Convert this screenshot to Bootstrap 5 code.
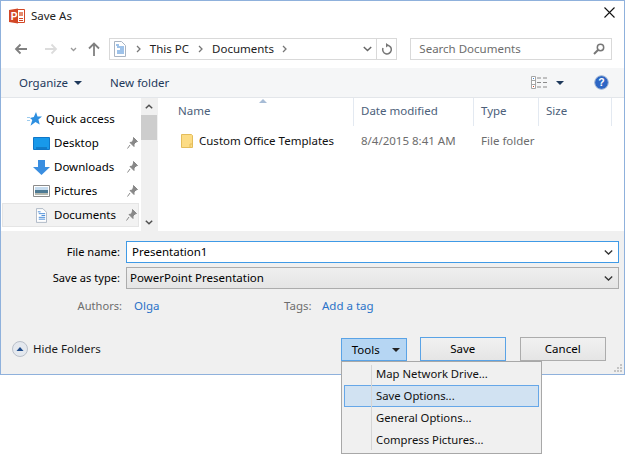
<!DOCTYPE html>
<html lang="en"><head><meta charset="utf-8"><title>Save As</title>
<link href="https://cdn.jsdelivr.net/npm/bootstrap@5.3.0/dist/css/bootstrap.min.css" rel="stylesheet">
<style>
html,body{margin:0;background:#fff;width:625px;height:454px;overflow:hidden}
body{font-family:"Noto Sans","Open Sans",sans-serif;font-size:11.5px;line-height:16px;color:#000}
.win{width:625px;height:375px;border:1px solid #8fb1dc;position:relative;background:#fff}
.ttl{height:31px;padding:0 0 2px 8px;gap:6px;color:#222}
.xbtn{margin-left:auto;margin-right:9px;margin-top:-6px}
.addr{height:29px;padding:6px 12px 1px 13px}
.navs{width:95px;gap:0;padding-left:0}
.crumb{width:289px;height:22px;border:1px solid #d9d9d9;padding-left:4px;gap:8px}
.crumb2{flex:1;padding-right:4px}
.rf{width:20px;height:20px;border-left:1px solid #d9d9d9}
.srch{width:202px;height:22px;margin-left:13px;border:1px solid #d9d9d9;color:#6d6d6d;padding:0 6px 0 8px}
.tbar{height:30px;margin-top:7px;background:#f5f6f7;color:#1e395b;border-bottom:1px solid #e3e6ea;padding-left:18px}
.main{height:133px}
.pane{width:140px;padding-top:9px}
.nrow{height:24px;margin-left:1px;padding-left:31px;position:relative;gap:4px}
.nrow.q{padding-left:25px}
.nrow.sel{background:#f2f2f2;outline:1px solid #e5e5e5;outline-offset:-1px;width:137px}
.pinr{position:absolute;left:125px;top:6px}
.sb{width:16px;background:#f0f0f0;height:133px;padding-top:0}
.thumb{height:25px;background:#cdcdcd;margin-top:1px}
.lst{flex:1;border-left:1px solid #f0f0f0;position:relative}
.hdr{height:28px;color:#4c607a}
.hc{height:28px;border-right:1px solid #e3e9f1;padding-left:7px;padding-top:5px}
.srt{position:absolute;left:100px;top:0}
.frow{height:27px;margin-top:2px;color:#6d6d6d}
.bot{height:143px;background:#f0f0f0;position:relative;padding-top:10px}
.frm{height:22px;margin-bottom:4px}
.lbl{width:119px;text-align:right;font-size:11.1px;margin-right:1px}
.fld{width:493px;height:22px;margin-left:5px;padding:0 5px;background:#fff;border:1px solid #3f9ae6}
.fld.g{background:linear-gradient(#efefef,#e5e5e5);border-color:#acacac;padding-left:3px}
.meta{margin-top:9px;height:16px;color:#6d6d6d}
.lk{color:#2a72c8}
.foot{position:absolute;left:0;right:0;top:106px;height:24px}
.hf{margin-left:11px;gap:5px;color:#1c1c1c}
.bt{height:24px;width:86px;background:linear-gradient(#f1f1f1,#e5e5e5);border:1px solid #acacac;text-align:center;line-height:21px}
.bt.pr{border-color:#5aa3e6}
.bt.tl{width:66px;background:#b6d6f3;border-color:#5aa3e6;padding:0 6px 0 10px;justify-content:space-between;height:23px;margin-top:1px}
.grip{position:absolute;right:2px;bottom:2px}
.mnu{position:absolute;left:341px;top:361px;width:201px;height:93px;background:#f0f0f0;border:1px solid #a8a8a8;padding:1px 2px 2px;font-size:11.3px;z-index:5}
.mnu::before{content:"";position:absolute;left:29px;top:3px;bottom:3px;width:1px;background:#d5d5d5}
.mi{height:22px;padding-left:31px;line-height:20px;border:1px solid transparent;color:#111}
.mi.on{background:#d1e2f2;border-color:#66a7e8}
</style></head>
<body>
<div class="win d-flex flex-column">
 <div class="ttl d-flex align-items-center">
  <svg width="16" height="16" viewBox="0 0 16 16"><path d="M8 1.500h7.500v13H8z" fill="#fff" stroke="#d24726"/><path d="M10 4h4v4h-4z" fill="#e58a6e"/><path d="M10 10h4v1h-4zM10 12h4v1h-4z" fill="#d24726"/><path d="M0 2l9-1.500v15L0 14z" fill="#d24726"/><text x="1.700" y="12" font-family="Liberation Sans" font-size="10" font-weight="700" fill="#fff">P</text></svg>
  <span>Save As</span>
  <svg class="xbtn" width="11" height="11" viewBox="0 0 11 11"><path d="M.5.500l10 10M10.500.500l-10 10" stroke="#111" stroke-width="1.100"/></svg>
 </div>
 <div class="addr d-flex align-items-center">
  <div class="navs d-flex align-items-center">
   <svg width="14" height="12" viewBox="0 0 14 12"><path d="M13 6H2M6.500 1.500L2 6l4.500 4.500" fill="none" stroke="#808080" stroke-width="1.800"/></svg>
   <svg style="margin-left:16px" width="14" height="12" viewBox="0 0 14 12"><path d="M1 6h11M7.500 1.500L12 6l-4.500 4.500" fill="none" stroke="#dcdcdc" stroke-width="1.800"/></svg>
   <svg style="margin-left:12px" width="7" height="5" viewBox="0 0 7 5"><path d="M1 1l2.500 2.500L6 1" fill="none" stroke="#9a9a9a" stroke-width="1.300"/></svg>
   <svg style="margin-left:11px" width="12" height="14" viewBox="0 0 12 14"><path d="M6 14V2M1 6.500L6 1.500l5 5" fill="none" stroke="#808080" stroke-width="1.800"/></svg>
  </div>
  <div class="crumb d-flex align-items-center">
   <svg width="12" height="16" viewBox="0 0 12 16"><path d="M.5.500h7l4 4v11H.5z" fill="#fff" stroke="#a9b4c2"/><path d="M3 6h7M6 8h4M3 10h7M3 12h7" stroke="#3f86d4"/><path d="M2 4h3" stroke="#3f86d4"/></svg>
   <svg width="5" height="8" viewBox="0 0 5 8" style="margin-left:2px"><path d="M1 1l3 3-3 3" fill="none" stroke="#777" stroke-width="1.300"/></svg>
   <span style="color:#222;margin-left:1px">This PC</span>
   <svg width="5" height="8" viewBox="0 0 5 8" style="margin-left:1px"><path d="M1 1l3 3-3 3" fill="none" stroke="#777" stroke-width="1.300"/></svg>
   <span style="color:#222;margin-left:1px">Documents</span>
   <svg width="5" height="8" viewBox="0 0 5 8"><path d="M1 1l3 3-3 3" fill="none" stroke="#777" stroke-width="1.300"/></svg>
   <span class="crumb2 d-flex justify-content-end align-items-center"><svg width="9" height="6" viewBox="0 0 9 6"><path d="M.8 1l3.700 3.500L8.200 1" fill="none" stroke="#666" stroke-width="1.500"/></svg></span>
   <span class="rf d-flex align-items-center justify-content-center" style="margin-left:-8px"><svg width="11" height="12" viewBox="0 0 11 12"><path d="M6.500 2.300A4.300 4.300 0 1 1 2 5" fill="none" stroke="#777" stroke-width="1.500"/><path d="M5 0l3 2.300-3 2.300z" fill="#777"/></svg></span>
  </div>
  <div class="srch d-flex align-items-center justify-content-between">
   <span>Search Documents</span>
   <svg width="12" height="12" viewBox="0 0 12 12"><circle cx="7.500" cy="4.500" r="3.200" fill="none" stroke="#777" stroke-width="1.500"/><path d="M5 7l-4 4" stroke="#777" stroke-width="2"/></svg>
  </div>
 </div>
 <div class="tbar d-flex align-items-center">
  <span>Organize</span>
  <svg style="margin-left:6px" width="8" height="4" viewBox="0 0 8 4"><path d="M0 0h8L4 4z" fill="#1e395b"/></svg>
  <span style="margin-left:28px">New folder</span>
  <svg style="margin-left:auto" width="17" height="13" viewBox="0 0 17 13"><path d="M.5.500h4v12h-4zM.5 4.500h4M.5 8.500h4" fill="#fff" stroke="#a5a5a5"/><path d="M6 2h4M12 2h4M6 6.500h4M12 6.500h4M6 11h4M12 11h4" stroke="#8a8a8a"/><path d="M2 2h1v1H2z" fill="#3f86d4"/><path d="M2 10h1v1H2z" fill="#d24726"/></svg>
  <svg style="margin-left:8px" width="8" height="4" viewBox="0 0 8 4"><path d="M0 0h8L4 4z" fill="#1e395b"/></svg>
  <svg style="margin-left:30px;margin-right:15px" width="15" height="15" viewBox="0 0 15 15"><circle cx="7.500" cy="7.500" r="6.800" fill="#2d66c4" stroke="#9fb4d3"/><text x="7.500" y="11.300" text-anchor="middle" font-family="Liberation Sans" font-size="10.500" font-weight="700" fill="#fff">?</text></svg>
 </div>
 <div class="main d-flex">
  <div class="pane">
   <div class="nrow q d-flex align-items-center">
    <svg width="15" height="14" viewBox="0 0 15 14"><path d="M9 0l1.500 4.500H15l-3.600 3 1.300 5L8.500 10l-5 3.700 1.800-5.800L3 6l3.800-1z" fill="#2d8fe0"/><path d="M0 5.500h3M0 8.500h3" stroke="#9ccbee"/></svg>
    <span>Quick access</span>
   </div>
   <div class="nrow d-flex align-items-center">
    <svg width="17" height="13" viewBox="0 0 17 13"><path d="M.500.500h16v12H.500z" fill="#1899ea" stroke="#0f76c8"/><path d="M3 11h11" stroke="#0b5fa8"/></svg>
    <span>Desktop</span>
    <svg class="pinr" width="11" height="12" viewBox="0 0 11 12"><path d="M6.500.500l4 4-1.500.500-2 2 0 2.500-4-4L5.500 5l1-3zM3 8l-2.500 3.500" fill="#888" stroke="#888"/></svg>
   </div>
   <div class="nrow d-flex align-items-center">
    <svg width="17" height="15" viewBox="0 0 17 15"><path d="M5 0h7v7h5l-8.500 8L0 7h5z" fill="#3a8ee0"/></svg>
    <span>Downloads</span>
    <svg class="pinr" width="11" height="12" viewBox="0 0 11 12"><path d="M6.500.500l4 4-1.500.500-2 2 0 2.500-4-4L5.500 5l1-3zM3 8l-2.500 3.500" fill="#888" stroke="#888"/></svg>
   </div>
   <div class="nrow d-flex align-items-center">
    <svg width="17" height="12" viewBox="0 0 17 12"><path d="M.500.500h16v11H.500z" fill="#fff" stroke="#8b8b8b"/><path d="M2 2h13v4H2z" fill="#c5dbee"/><path d="M2 5h13v3H2z" fill="#4d7a94"/><path d="M2 8h13v2H2z" fill="#b6b9ae"/></svg>
    <span>Pictures</span>
    <svg class="pinr" width="11" height="12" viewBox="0 0 11 12"><path d="M6.500.500l4 4-1.500.500-2 2 0 2.500-4-4L5.500 5l1-3zM3 8l-2.500 3.500" fill="#888" stroke="#888"/></svg>
   </div>
   <div class="nrow sel d-flex align-items-center" style="padding-left:34px;gap:7px">
    <svg width="11" height="15" viewBox="0 0 12 16"><path d="M.5.500h7l4 4v11H.5z" fill="#fff" stroke="#a9b4c2"/><path d="M3 6h7M6 8h4M3 10h7M3 12h7M2 4h3" stroke="#3f86d4"/></svg>
    <span>Documents</span>
    <svg class="pinr" width="11" height="12" viewBox="0 0 11 12" style="left:124px"><path d="M6.500.500l4 4-1.500.500-2 2 0 2.500-4-4L5.500 5l1-3zM3 8l-2.500 3.500" fill="#888" stroke="#888"/></svg>
   </div>
  </div>
  <div class="sb d-flex flex-column">
   <div class="d-flex align-items-center justify-content-center" style="height:16px"><svg width="8" height="5" viewBox="0 0 8 5"><path d="M.800 4.300L4 1.200l3.200 3.100" fill="none" stroke="#505050" stroke-width="1.500"/></svg></div>
   <div class="thumb"></div>
   <div class="d-flex align-items-center justify-content-center mt-auto" style="height:16px;margin-bottom:1px"><svg width="8" height="5" viewBox="0 0 8 5"><path d="M.800.700L4 3.800 7.200.700" fill="none" stroke="#505050" stroke-width="1.500"/></svg></div>
  </div>
  <div class="lst">
   <svg class="srt" width="8" height="4" viewBox="0 0 8 4" style="left:101px;top:1px"><path d="M0 4h8L4 0z" fill="#a7bcd6"/></svg>
   <div class="hdr d-flex">
    <div class="hc" style="width:196px;padding-left:20px">Name</div>
    <div class="hc" style="width:120px">Date modified</div>
    <div class="hc" style="width:65px">Type</div>
    <div class="hc" style="width:73px">Size</div>
   </div>
   <div class="frow d-flex align-items-center" style="margin-top:1px">
    <div class="d-flex align-items-center" style="width:196px;padding-left:23px;gap:6px;color:#111">
     <svg width="12" height="14" viewBox="0 0 12 14"><path d="M.500.500h10l1 1v12H.500z" fill="#fcdc85" stroke="#e4bd5b"/><path d="M9 13.500V10h2.500" fill="none" stroke="#e4bd5b"/></svg>
     <span>Custom Office Templates</span>
    </div>
    <div style="width:120px;padding-left:7px">8/4/2015 8:41 AM</div>
    <div style="padding-left:7px">File folder</div>
   </div>
  </div>
 </div>
 <div class="bot">
  <div class="frm d-flex align-items-center"><div class="lbl">File name:</div><div class="fld d-flex align-items-center justify-content-between"><span>Presentation1</span><svg width="9" height="5" viewBox="0 0 9 5"><path d="M.8.600l3.700 3.400L8.200.600" fill="none" stroke="#333" stroke-width="1.300"/></svg></div></div>
  <div class="frm d-flex align-items-center"><div class="lbl">Save as type:</div><div class="fld g d-flex align-items-center justify-content-between" style="padding-right:5px"><span>PowerPoint Presentation</span><svg width="9" height="5" viewBox="0 0 9 5"><path d="M.8.600l3.700 3.400L8.200.600" fill="none" stroke="#333" stroke-width="1.300"/></svg></div></div>
  <div class="meta d-flex"><div class="lbl" style="width:121px">Authors:</div><div class="lk" style="margin-left:11px;width:150px">Olga</div><div style="width:38px">Tags:</div><div class="lk">Add a tag</div></div>
  <div class="foot d-flex align-items-start">
   <div class="hf d-flex align-items-center" style="height:24px"><svg width="16" height="16" viewBox="0 0 16 16"><circle cx="8" cy="8" r="7.500" fill="#e4e8ee" stroke="#b9bfc9"/><path d="M4.500 10L8 6l3.500 4z" fill="#1e4a8a"/></svg><span>Hide Folders</span></div>
   <div class="bt tl d-flex align-items-center" style="margin-left:240px"><span>Tools</span><svg width="8" height="4" viewBox="0 0 8 4"><path d="M0 0h8L4 4z" fill="#222"/></svg></div>
   <div class="bt pr" style="margin-left:13px">Save</div>
   <div class="bt" style="margin-left:14px">Cancel</div>
  </div>
  <svg class="grip" width="9" height="9" viewBox="0 0 9 9"><path d="M7 1h2v2H7zM4 4h2v2H4zM7 4h2v2H7zM1 7h2v2H1zM4 7h2v2H4zM7 7h2v2H7z" fill="#c4c4c4"/></svg>
 </div>
</div>
<div class="mnu">
 <div class="mi">Map Network Drive...</div>
 <div class="mi on">Save Options...</div>
 <div class="mi">General Options...</div>
 <div class="mi">Compress Pictures...</div>
</div>
<script src="https://cdn.jsdelivr.net/npm/bootstrap@5.3.0/dist/js/bootstrap.bundle.min.js"></script>
</body></html>
